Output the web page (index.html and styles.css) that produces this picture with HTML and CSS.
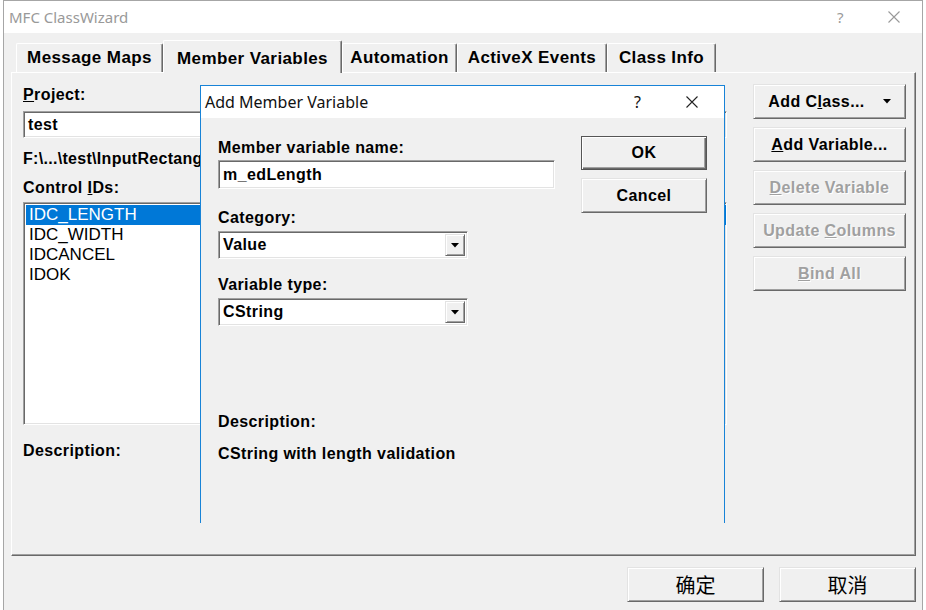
FILE: index.html
```html
<!DOCTYPE html>
<html>
<head>
<meta charset="utf-8">
<title>MFC ClassWizard</title>
<link rel="stylesheet" href="styles.css">
</head>
<body>
<div class="window">
  <div class="titlebar">
    <span class="title">MFC ClassWizard</span>
    <span class="tb-help">?</span>
    <svg class="tb-close" width="12" height="12" viewBox="0 0 12 12"><path d="M0.5 0.5 L11.5 11.5 M11.5 0.5 L0.5 11.5" stroke="#999" stroke-width="1.1" fill="none"/></svg>
  </div>
  <div class="tabs">
    <div class="tab t1"><span>Message Maps</span></div>
    <div class="tab t2 active"><span>Member Variables</span></div>
    <div class="tab t3"><span>Automation</span></div>
    <div class="tab t4"><span>ActiveX Events</span></div>
    <div class="tab t5"><span>Class Info</span></div>
  </div>
  <div class="panel">
    <div class="main">
      <div class="col">
        <div class="label"><u>P</u>roject:</div>
        <div class="field combo-field project"><span class="val">test</span></div>
        <div class="path">F:\...\test\InputRectangleDlg.h, InputRectangleDlg.cpp</div>
        <div class="label ids">Control <u>I</u>Ds:</div>
        <div class="field listbox">
          <div class="item sel">IDC_LENGTH</div>
          <div class="item">IDC_WIDTH</div>
          <div class="item">IDCANCEL</div>
          <div class="item">IDOK</div>
        </div>
        <div class="label desc">Description:</div>
      </div>
      <div class="col col-b">
        <div class="label">Class <u>n</u>ame:</div>
        <div class="field combo-field project"><span class="val">CInputRectangleDlg</span></div>
        <div class="path">&nbsp;</div>
        <div class="label ids">Control IDs:</div>
        <div class="field listbox">
          <div class="item sel">&nbsp;</div>
        </div>
      </div>
    </div>
    <div class="side">
      <div class="btn btn-class"><span>Add C<u>l</u>ass...</span><svg class="arrow" width="8" height="5" viewBox="0 0 8 5"><path d="M0 0 H8 L4 4.5 Z" fill="#000"/></svg></div>
      <div class="btn"><span><u>A</u>dd Variable...</span></div>
      <div class="btn disabled"><span><u>D</u>elete Variable</span></div>
      <div class="btn disabled"><span>Update <u>C</u>olumns</span></div>
      <div class="btn disabled"><span><u>B</u>ind All</span></div>
    </div>
  </div>
  <div class="footer">
    <div class="btn cjk"><span>确定</span></div>
    <div class="btn cjk"><span>取消</span></div>
  </div>
</div>

<div class="dialog">
  <div class="dlg-title">
    <span class="title dark">Add Member Variable</span>
    <span class="tb-help dark">?</span>
    <svg class="tb-close" width="12" height="12" viewBox="0 0 12 12"><path d="M0.5 0.5 L11.5 11.5 M11.5 0.5 L0.5 11.5" stroke="#222" stroke-width="1.1" fill="none"/></svg>
  </div>
  <div class="dlg-body">
    <div class="form">
      <div class="label">Member variable name:</div>
      <div class="field edit"><span class="val">m_edLength</span></div>
      <div class="label cat">Category:</div>
      <div class="field combo"><span class="val">Value</span><span class="drop"><svg width="8" height="5" viewBox="0 0 8 5"><path d="M0 0 H8 L4 4.5 Z" fill="#000"/></svg></span></div>
      <div class="label vtype">Variable type:</div>
      <div class="field combo"><span class="val">CString</span><span class="drop"><svg width="8" height="5" viewBox="0 0 8 5"><path d="M0 0 H8 L4 4.5 Z" fill="#000"/></svg></span></div>
      <div class="label dlg-desc">Description:</div>
      <div class="label dlg-desc-text">CString with length validation</div>
    </div>
    <div class="dlg-btns">
      <div class="btn default"><span>OK</span></div>
      <div class="btn"><span>Cancel</span></div>
    </div>
  </div>
</div>
</body>
</html>
```

FILE: styles.css
```css
* { box-sizing: border-box; margin: 0; padding: 0; }
html, body { width: 926px; height: 610px; overflow: hidden; background: #fff; }
body { position: relative; font-family: "Liberation Sans", Arial, sans-serif; color: #000; }

.window {
  margin-left: 3px;
  width: 920px;
  height: 610px;
  border: 1px solid #a6a6a6;
  border-bottom: none;
  background: #f0f0f0;
  display: flex;
  flex-direction: column;
}

.titlebar, .dlg-title {
  height: 32px;
  background: #fff;
  display: flex;
  align-items: center;
  flex-shrink: 0;
}
.title {
  font-family: "Noto Sans", "Liberation Sans", sans-serif;
  font-size: 15px;
  color: #999;
  padding-left: 5px;
  flex: 1;
}
.tb-help {
  font-family: "Noto Sans", "Liberation Sans", sans-serif;
  font-size: 15px;
  color: #999;
  width: 12px;
}
.tb-close { margin: 0 22px 0 39px; }
.dark { color: #111; }

/* tabs */
.tabs {
  height: 39px;
  display: flex;
  align-items: flex-end;
  padding-left: 12px;
  flex-shrink: 0;
}
.tab {
  height: 29px;
  font-size: 17px;
  font-weight: bold;
  letter-spacing: 0.4px;
  display: flex;
  align-items: center;
  justify-content: center;
  border-top: 1px solid #fff;
  border-left: 1px solid #fff;
  border-right: 1px solid #696969;
  box-shadow: inset -1px 0 #a0a0a0;
  border-radius: 2px 2px 0 0;
  white-space: nowrap;
}
.t1 { width: 147px; }
.t2 { width: 179px; }
.t3 { width: 115px; }
.t4 { width: 150px; }
.t5 { width: 109px; }
.tab.active {
  height: 33px;
  margin-bottom: -1px;
  padding-top: 3px;
  background: #f0f0f0;
  position: relative;
  z-index: 1;
}

/* panel */
.panel {
  height: 484px;
  margin: 0 6px 0 7px;
  border-top: 1px solid #fff;
  border-left: 1px solid #fff;
  border-right: 1px solid #696969;
  border-bottom: 1px solid #696969;
  box-shadow: inset -1px -1px #a0a0a0;
  padding: 13px 9px 0 11px;
  display: flex;
  flex-shrink: 0;
}
.main { flex: 1; min-width: 0; display: flex; gap: 20px; }
.col { width: 330px; flex-shrink: 0; display: flex; flex-direction: column; }
.col-b { width: auto; flex: 1; min-width: 0; }
.side {
  width: 153px;
  flex-shrink: 0;
  margin-left: 26px;
  margin-top: -2px;
  display: flex;
  flex-direction: column;
  gap: 8px;
}

.label {
  font-size: 16px;
  font-weight: bold;
  line-height: 18px;
  letter-spacing: 0.4px;
  white-space: nowrap;
}

.field {
  background: #fff;
  border: 1px solid;
  border-color: #a0a0a0 #fff #fff #a0a0a0;
  box-shadow: inset 1px 1px #696969, inset -1px -1px #e3e3e3;
  font-size: 16px;
  font-weight: bold;
  letter-spacing: 0.4px;
  display: flex;
  align-items: center;
  position: relative;
  overflow: hidden;
}
.val { padding-left: 4px; white-space: nowrap; }

.project { margin-top: 7px; height: 27px; flex-shrink: 0; }
.path {
  margin-top: 12px;
  font-size: 16px;
  font-weight: bold;
  letter-spacing: 0.3px;
  line-height: 18px;
  white-space: nowrap;
  overflow: hidden;
}
.ids { margin-top: 11px; }
.listbox {
  margin-top: 5px;
  height: 223px;
  flex-shrink: 0;
  flex-direction: column;
  align-items: stretch;
  padding: 2px 0 0 2px;
}
.item {
  height: 20px;
  line-height: 20px;
  font-size: 17px;
  font-weight: normal;
  letter-spacing: 0;
  padding-left: 3px;
}
.item.sel { background: #0078d7; color: #fff; }
.desc { margin-top: 17px; }

/* buttons */
.btn {
  height: 35px;
  flex-shrink: 0;
  display: flex;
  align-items: center;
  justify-content: center;
  font-size: 16px;
  font-weight: bold;
  letter-spacing: 0.4px;
  background: #f0f0f0;
  border: 1px solid;
  border-color: #e3e3e3 #696969 #696969 #e3e3e3;
  box-shadow: inset 1px 1px #fff, inset -1px -1px #a0a0a0;
  white-space: nowrap;
}
.btn-class .arrow { margin-left: 18px; }
.btn.disabled { color: #a0a0a0; text-shadow: 1px 1px #fff; }
.btn.default { border-color: #555; box-shadow: inset 1px 1px #fff, inset -1px -1px #696969, inset -2px -2px #a0a0a0; }

.footer {
  display: flex;
  justify-content: flex-end;
  gap: 15px;
  padding: 11px 6px 0 0;
}
.footer .btn { width: 137px; }
.cjk {
  font-family: "Noto Sans CJK SC", sans-serif;
  font-weight: normal;
  font-size: 20px;
  letter-spacing: 0;
}

/* dialog overlay */
.dialog {
  position: absolute;
  left: 200px;
  top: 85px;
  width: 525px;
  height: 438px;
  border: 1px solid #1883d7;
  border-bottom: none;
  background: #f0f0f0;
  display: flex;
  flex-direction: column;
}
.dlg-title .title { padding-left: 4px; font-size: 16px; }
.dlg-title .tb-help { font-size: 16px; }
.dlg-title .tb-close { margin: 0 26px 0 40px; }
.dlg-body {
  flex: 1;
  display: flex;
  padding: 18px 0 0 17px;
}
.form { width: 337px; display: flex; flex-direction: column; padding-top: 3px; }
.edit { margin-top: 3px; height: 29px; }
.cat { margin-top: 20px; }
.combo { margin-top: 4px; height: 28px; width: 250px; }
.vtype { margin-top: 17px; }
.drop {
  position: absolute;
  right: 2px;
  top: 2px;
  bottom: 2px;
  width: 20px;
  background: #f0f0f0;
  border: 1px solid;
  border-color: #e3e3e3 #696969 #696969 #e3e3e3;
  box-shadow: inset 1px 1px #fff, inset -1px -1px #a0a0a0;
  display: flex;
  align-items: center;
  justify-content: center;
}
.dlg-desc { margin-top: 87px; }
.dlg-desc-text { margin-top: 14px; }
.dlg-btns {
  width: 126px;
  margin-left: 26px;
  display: flex;
  flex-direction: column;
  gap: 8px;
}
.dlg-btns .btn.default { height: 34px; }
```
